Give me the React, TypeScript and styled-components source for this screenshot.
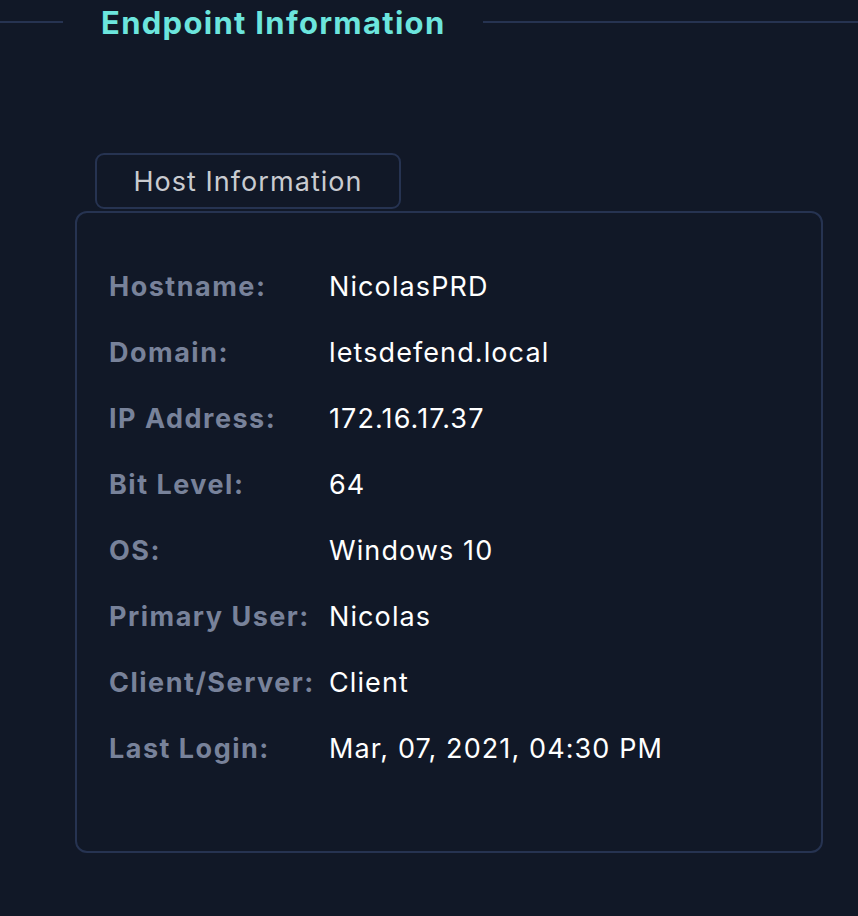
import styled, { createGlobalStyle } from "styled-components";

const GlobalStyle = createGlobalStyle`
  html, body {
    margin: 0;
    padding: 0;
    background: #111827;
  }
  body {
    font-family: Inter, "Noto Sans", "Liberation Sans", sans-serif;
    min-height: 916px;
  }
`;

const Page = styled.div`
  width: 858px;
  min-height: 916px;
  background: #111827;
`;

const TitleBar = styled.div`
  display: flex;
  align-items: center;
  height: 44px;
  gap: 37px;
`;

const Rule = styled.div<{ $grow?: boolean }>`
  height: 2px;
  background: #263351;
  flex: ${(p) => (p.$grow ? "1 1 auto" : "0 0 63px")};
`;

const Title = styled.h1`
  margin: 0 0 0 1px;
  font-size: 31px;
  font-weight: 700;
  color: #6ce5dd;
  letter-spacing: 1.3px;
  white-space: nowrap;
`;

const Section = styled.section`
  padding: 109px 35px 0 75px;
`;

const Tab = styled.div`
  display: inline-flex;
  align-items: center;
  justify-content: center;
  margin-left: 20px;
  margin-bottom: 2px;
  width: 306px;
  height: 56px;
  box-sizing: border-box;
  border: 2px solid #263351;
  border-radius: 9px;
  color: #c9cbd0;
  font-size: 27px;
  font-weight: 400;
  letter-spacing: 1.05px;
`;

const Panel = styled.div`
  box-sizing: border-box;
  width: 748px;
  height: 642px;
  border: 2px solid #263351;
  border-radius: 12px;
  padding: 40px 32px 0 32px;
`;

const Row = styled.div`
  display: grid;
  grid-template-columns: 220px 1fr;
  align-items: center;
  height: 66px;
  font-size: 27px;
`;

const Label = styled.span`
  color: #78829a;
  font-weight: 700;
  letter-spacing: 1.5px;
  white-space: nowrap;
`;

const Value = styled.span`
  color: #ffffff;
  font-weight: 400;
  letter-spacing: 1.1px;
  white-space: nowrap;
`;

const rows: [string, string][] = [
  ["Hostname:", "NicolasPRD"],
  ["Domain:", "letsdefend.local"],
  ["IP Address:", "172.16.17.37"],
  ["Bit Level:", "64"],
  ["OS:", "Windows 10"],
  ["Primary User:", "Nicolas"],
  ["Client/Server:", "Client"],
  ["Last Login:", "Mar, 07, 2021, 04:30 PM"],
];

export default function App() {
  return (
    <Page>
      <GlobalStyle />
      <TitleBar>
        <Rule />
        <Title>Endpoint Information</Title>
        <Rule $grow />
      </TitleBar>
      <Section>
        <Tab>Host Information</Tab>
        <Panel>
          {rows.map(([label, value]) => (
            <Row key={label}>
              <Label>{label}</Label>
              <Value>{value}</Value>
            </Row>
          ))}
        </Panel>
      </Section>
    </Page>
  );
}
